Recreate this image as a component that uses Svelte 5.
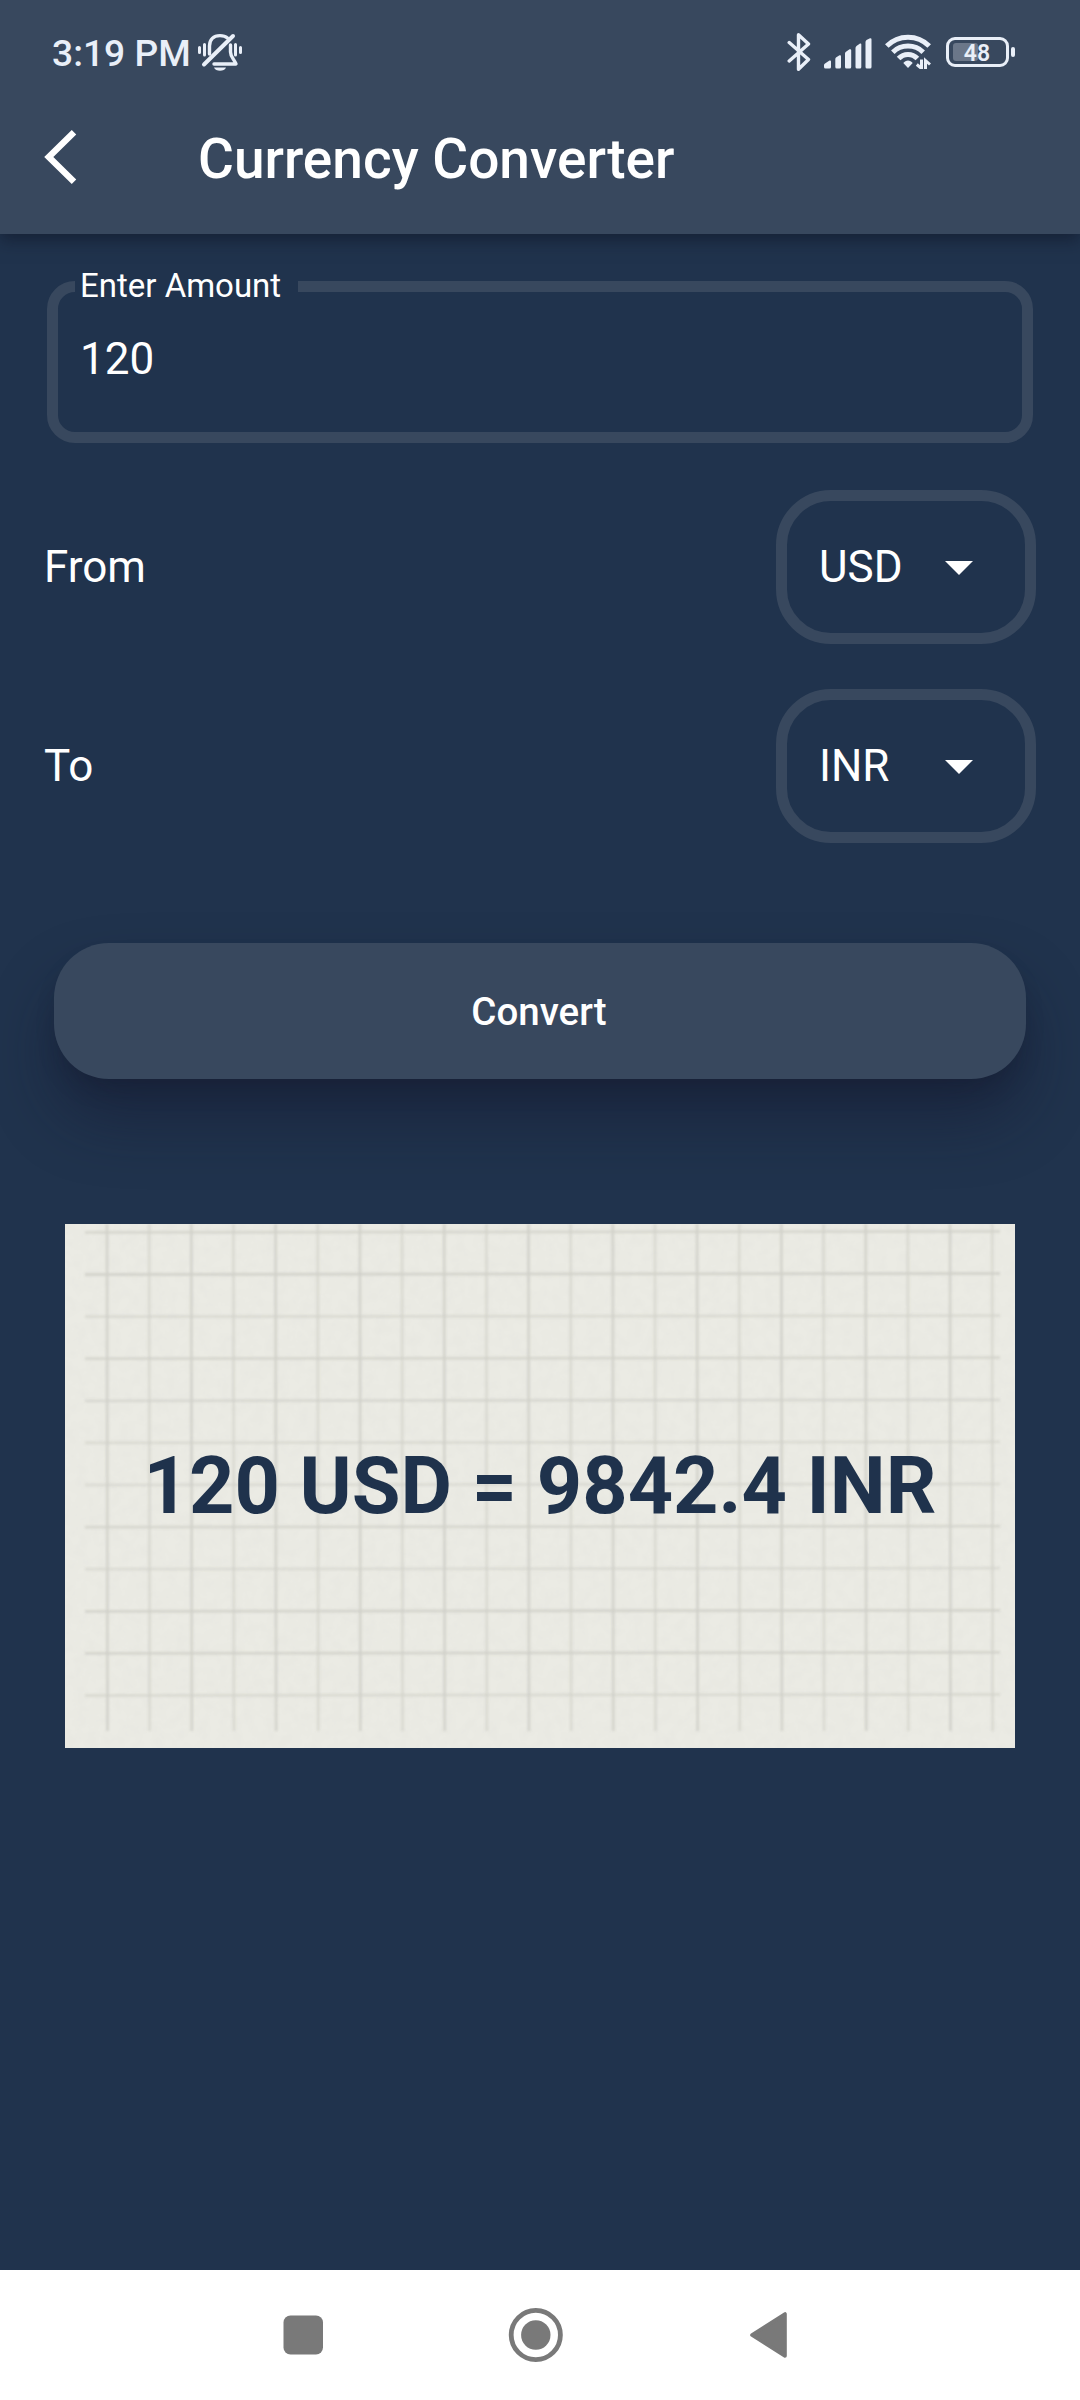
<script>
  let amount = $state(120);
  let from = $state('USD');
  let to = $state('INR');
  const rates = { USD: 1, INR: 82.02 };
  let result = $derived(Math.round((amount / rates[from]) * rates[to] * 100) / 100);

  // Grid rules printed on the paper card, as [offset, opacity]
  const columns = Array.from({ length: 22 }, (_, i) => [42 + i * 42.15, i % 2 ? 0.6 : 0.8]);
  const rows = [0.75, 0.85, 0.6, 0.75, 0.65, 0.6, 0.55, 0.75, 0.55, 0.8, 0.8, 0.6].map((o, i) => [8.4 + i * 42.1, o]);
</script>

{#snippet picker(code)}
  <button class="picker">
    <span>{code}</span>
    <svg class="caret" viewBox="0 0 28 14" width="28" height="14"><path d="M0 0H28L14 14Z" fill="#fff" /></svg>
  </button>
{/snippet}

<div class="screen">
  <header>
    <div class="status">
      <span class="time">3:19 PM</span>
      <svg class="bell" viewBox="0 0 46 40" width="46" height="40" fill="none" stroke="#e9eff8" stroke-width="3.4" stroke-linecap="round" stroke-linejoin="round">
        <path d="M2.500 15.500V20.500M7.500 12.500V23M38.500 12.500V23M43.500 15.500V20.500" stroke-width="3" />
        <path d="M12.500 22V14C12.500 7.500 16.500 3.600 23 3.600C26 3.600 28.500 4.300 30.500 6" />
        <path d="M33.500 13V20C33.500 25 37 27 39 32H17" />
        <path d="M7 32.500L36 4" stroke-width="4" />
        <path d="M17 35.500H29C27.500 39.800 18.500 39.800 17 35.500Z" fill="#e9eff8" stroke="none" />
      </svg>
      <div class="indicators">
        <svg viewBox="0 0 24 40" width="24" height="40" fill="none" stroke="#e9eff8" stroke-width="3.400" stroke-linecap="round" stroke-linejoin="round">
          <path d="M2.200 10.500L21.500 27.500L11.500 37.200V2.700L21.500 12L2.200 29" />
        </svg>
        <svg class="signal" viewBox="0 0 48 31" width="48" height="31" fill="#e9eff8">
          <path d="M0 27Q0 26 1 25.500L5.500 22.500Q7 22 7 23.500V29Q7 30.500 5.500 30.500H1.500Q0 30.500 0 29Z" />
          <path d="M11.300 21Q11.300 20 12 19.500L15.500 17.300Q17 16.800 17 18.300V29Q17 30.500 15.500 30.500H12.800Q11.300 30.500 11.300 29Z" />
          <path d="M21 15.500Q21 14.300 22 13.700L25.500 11.300Q27.200 10.800 27.200 12.300V29Q27.200 30.500 25.700 30.500H22.500Q21 30.500 21 29Z" />
          <path d="M31.500 10Q31.500 8.800 32.500 8L36 5.500Q37.300 5 37.300 6.500V29Q37.300 30.500 35.800 30.500H33Q31.500 30.500 31.500 29Z" />
          <path d="M41.500 4Q41.500 2.800 42.500 2L46 .3Q47.500 0 47.500 1.500V29Q47.500 30.500 46 30.500H43Q41.500 30.500 41.500 29Z" />
        </svg>
        <svg class="wifi" viewBox="0 0 46 36" width="46" height="36" fill="none" stroke="#e9eff8" stroke-width="5">
          <path d="M1.800 13C13.500 1.200 32.500 1.200 44.200 13" />
          <path d="M7.800 19.200C16 11 30 11 38.200 19.200" />
          <path d="M13.600 25.500C18.800 20 27.200 20 32.400 25.500" />
          <path d="M18.300 30C20.700 26.500 25.300 26.500 27.700 30L23 35Z" fill="#e9eff8" stroke="none" />
          <path d="M36.500 26.500V35.500L31.800 31.500M40.500 36V27.500L45 31.500" stroke-width="3" />
        </svg>
        <div class="battery"><div class="cell"><i></i><b>48</b></div><div class="cap"></div></div>
      </div>
    </div>
    <div class="bar">
      <svg viewBox="0 0 34 56" width="34" height="56" fill="none" stroke="#fff" stroke-width="6.400"><path d="M30 3.200L4.800 28L30 52.800" /></svg>
      <h1>Currency Converter</h1>
    </div>
  </header>

  <main>
    <fieldset>
      <legend>Enter Amount</legend>
      <div class="value">{amount}</div>
    </fieldset>
    <div class="line"><span>From</span>{@render picker(from)}</div>
    <div class="line"><span>To</span>{@render picker(to)}</div>
    <button class="convert">Convert</button>
    <section class="paper">
      <svg class="grid" viewBox="0 0 950 524" width="950" height="524">
        <defs>
          <filter id="grain" x="0" y="0" width="100%" height="100%">
            <feTurbulence type="fractalNoise" baseFrequency="0.09" numOctaves="3" seed="4" />
            <feColorMatrix values="0 0 0 0 0.6  0 0 0 0 0.6  0 0 0 0 0.58  0.16 0 0 0 -0.05" />
          </filter>
          <filter id="soft" filterUnits="userSpaceOnUse" x="0" y="0" width="950" height="524"><feGaussianBlur stdDeviation="0.9" /></filter>
        </defs>
        <rect width="950" height="524" filter="url(#grain)" />
        <g stroke="#d0d0c9" stroke-width="2.800" filter="url(#soft)">
          {#each columns as [x, opacity]}<path d="M{x} 0L{x + 0.5} 507" {opacity} />{/each}
          {#each rows as [y, opacity]}<path d="M20 {y}L935 {y - 1}" {opacity} />{/each}
        </g>
      </svg>
      <output>{amount} {from} = {result} {to}</output>
    </section>
  </main>

  <nav>
    <svg viewBox="0 0 1080 130" width="1080" height="130" fill="#797979">
      <rect x="283.500" y="45.500" width="39.500" height="39" rx="7" />
      <circle cx="535.800" cy="65" r="24.600" fill="none" stroke="#797979" stroke-width="4.800" />
      <circle cx="535.800" cy="65" r="14.700" />
      <path d="M752 65L785 44V86Z" stroke="#797979" stroke-width="3.600" stroke-linejoin="round" />
    </svg>
  </nav>
</div>

<style>
  :global(body) { margin: 0; background: #20334d; }
  .screen { width: 1080px; height: 2400px; display: flex; flex-direction: column; overflow: hidden; background: #20334d; color: #fff; font-family: Roboto, sans-serif; }
  button { font-family: inherit; color: inherit; background: none; border: 0; margin: 0; }
  svg { display: block; flex: none; }
  header { height: 234px; box-sizing: border-box; background: #38485e; box-shadow: 0 6px 16px rgba(12, 16, 32, 0.5); }
  .status { height: 80px; padding: 32px 65px 0 52px; box-sizing: border-box; display: flex; color: #e9eff8; }
  .time { font-size: 37.2px; font-weight: 500; line-height: 42px; white-space: nowrap; width: 145px; }
  .indicators { margin-left: auto; display: flex; align-items: flex-start; }
  .signal { margin: 6px 0 0 13px; }
  .wifi { margin: 1px 0 0 13px; }
  .battery { display: flex; align-items: center; gap: 2px; margin: 5px 0 0 15px; }
  .cell { box-sizing: border-box; width: 63px; height: 30px; border: 3px solid #e9eff8; border-radius: 9px; padding: 3px 4px; display: grid; }
  .cell i { grid-area: 1 / 1; width: 25px; height: 18px; border-radius: 3px; background: #6b7789; }
  .cell b { grid-area: 1 / 1; font-size: 23px; font-weight: 600; line-height: 21px; text-align: center; padding-right: 1px; }
  .cap { width: 4px; height: 10px; border-radius: 2px; background: #e9eff8; }
  .bar { height: 154px; display: flex; align-items: flex-start; padding-left: 44px; }
  .bar svg { margin-top: 49px; }
  h1 { margin: 47px 0 0 120px; font-size: 55px; font-weight: 500; line-height: 64px; white-space: nowrap; }
  main { flex: 1; display: flex; flex-direction: column; padding: 0 44px; }
  fieldset { box-sizing: border-box; height: 177px; margin: 32px 3px 0; padding: 0 0 0 22px; border: 11px solid #38485e; border-radius: 28px; min-width: 0; }
  legend { box-sizing: border-box; width: 223px; margin-left: -5px; padding: 0 0 0 5px; font-size: 33px; line-height: 40px; white-space: nowrap; }
  .value { font-size: 44px; line-height: 52px; margin-top: 27px; }
  .line { height: 154px; margin-top: 45px; display: flex; justify-content: space-between; align-items: center; font-size: 44px; }
  fieldset + .line { margin-top: 47px; }
  .picker { box-sizing: border-box; width: 260px; height: 154px; display: flex; align-items: center; justify-content: space-between; padding: 0 52px 0 32px; border: 11px solid #38485e; border-radius: 55px; font-size: 44px; }
  .caret { margin-top: 2px; }
  .convert { height: 136px; margin: 100px 10px 0; padding: 1px 2px 0 0; flex: none; border-radius: 55px; background: #38485e; font-size: 38.5px; font-weight: 500; box-shadow: 0 40px 64px rgba(18, 20, 44, 0.44), 0 14px 24px -8px rgba(16, 20, 34, 0.3); }
  .paper { width: 950px; height: 524px; margin: 145px auto 0; display: grid; place-items: center; background: #ebebe4; }
  .grid, output { grid-area: 1 / 1; }
  output { z-index: 1; color: #1f324c; font-size: 79.2px; font-weight: 700; line-height: 94px; white-space: nowrap; }
  nav { height: 130px; background: #fff; }
</style>
